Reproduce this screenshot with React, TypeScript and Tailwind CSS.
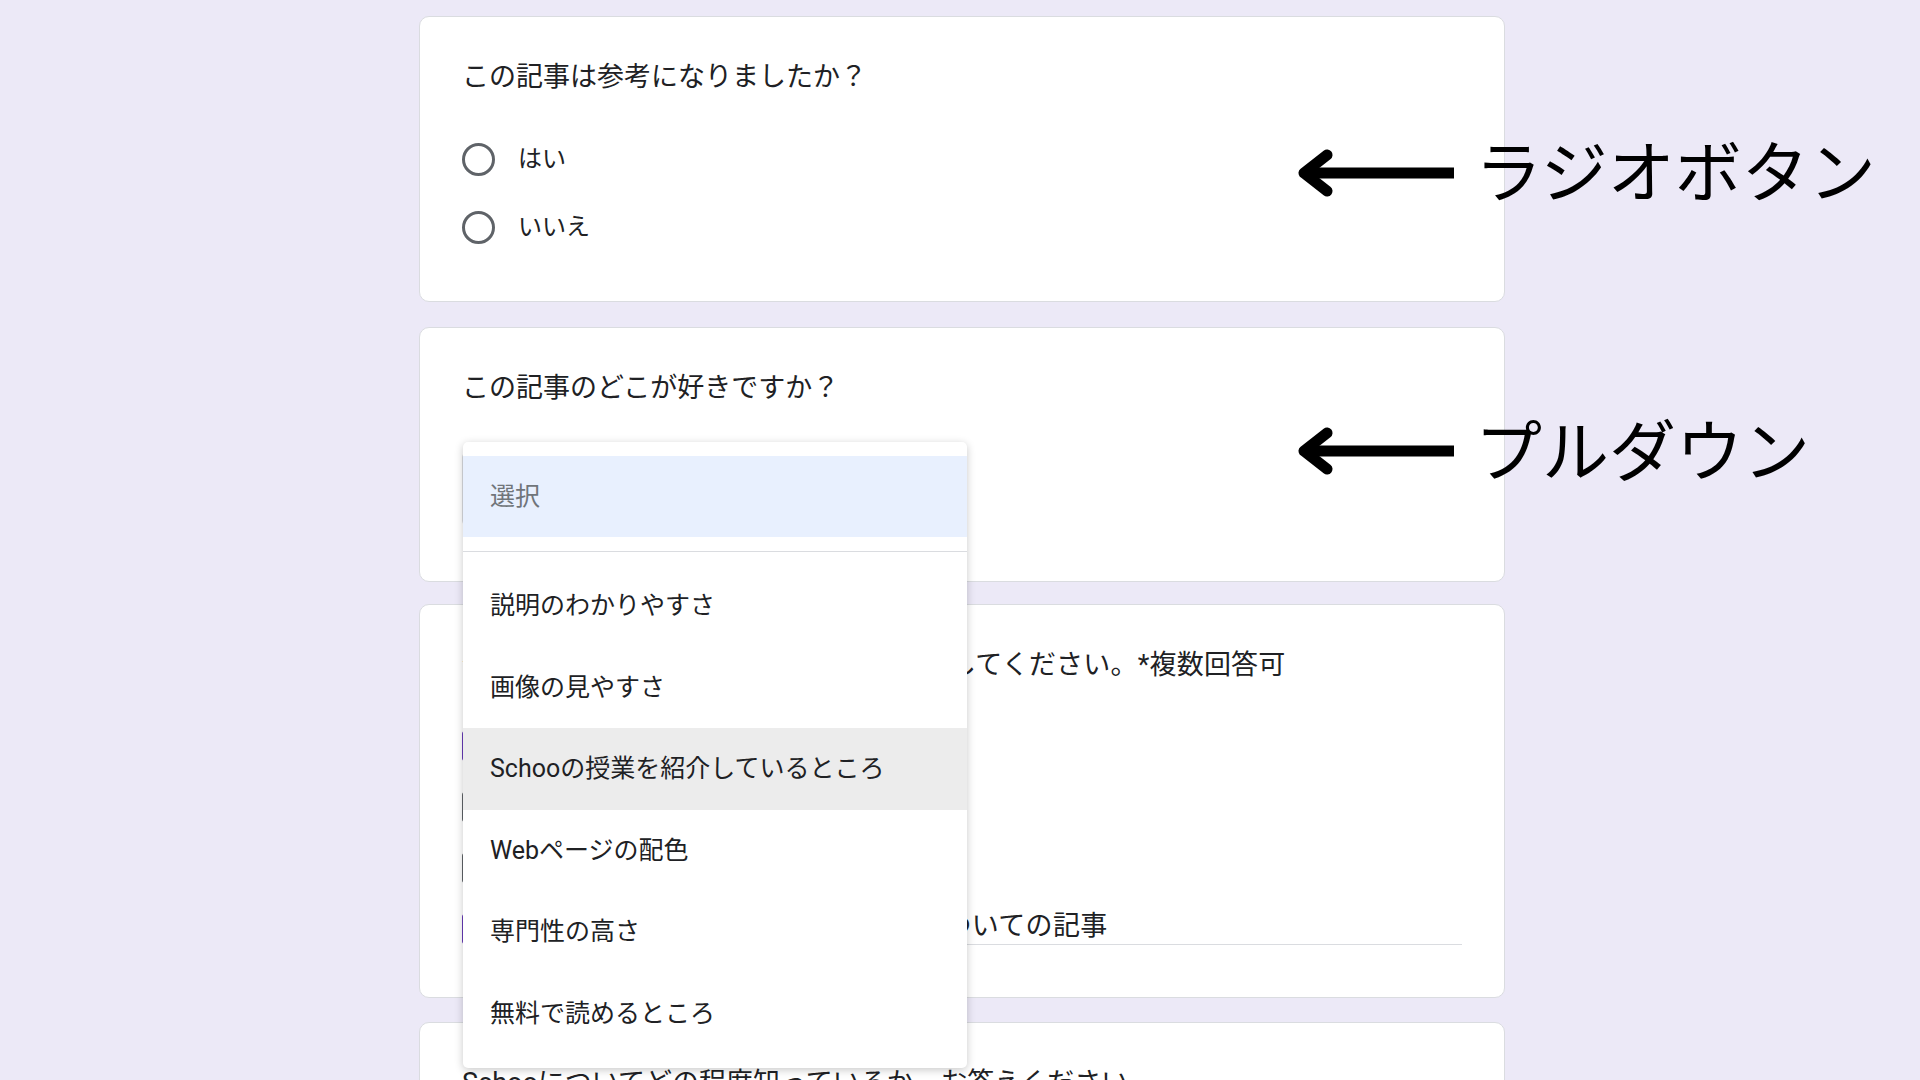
const options = [
  '説明のわかりやすさ',
  '画像の見やすさ',
  'Schooの授業を紹介しているところ',
  'Webページの配色',
  '専門性の高さ',
  '無料で読めるところ',
];

function Card({ className, children }: { className?: string; children: React.ReactNode }) {
  return (
    <div className={`relative bg-white border border-[#dadce0] rounded-[10px] px-[42px] ${className ?? ''}`}>
      {children}
    </div>
  );
}

function Radio({ label }: { label: string }) {
  return (
    <div className="flex items-center h-[40px]">
      <span className="w-[33px] h-[33px] rounded-full border-[3px] border-[#5f6368] shrink-0" />
      <span className="ml-[23px] text-[24px] text-[#202124]">{label}</span>
    </div>
  );
}

function Checkbox({ checked }: { checked?: boolean }) {
  return (
    <span
      className={
        checked
          ? 'w-[30px] h-[30px] rounded-[3px] bg-[#673ab7] shrink-0'
          : 'w-[30px] h-[30px] rounded-[3px] border-[3px] border-[#5f6368] shrink-0'
      }
    />
  );
}

function Arrow() {
  return (
    <svg width="160" height="50" viewBox="0 0 160 50" fill="none">
      <path d="M156 25 H8" stroke="#000" strokeWidth="11" strokeLinecap="butt" />
      <path d="M29 7 L6 25 L29 43" stroke="#000" strokeWidth="11" strokeLinecap="round" strokeLinejoin="round" />
    </svg>
  );
}

export default function App() {
  return (
    <div className="relative h-screen overflow-hidden bg-[#ece9f7] font-[Roboto,'Noto_Sans_CJK_JP',sans-serif] text-[#202124]">
      <div className="w-[1086px] ml-[419px] pt-[16px] flex flex-col">
        {/* ラジオボタン */}
        <Card className="h-[286px] pt-[40px]">
          <p className="text-[27px] leading-[40px]">この記事は参考になりましたか？</p>
          <div className="mt-[42px] flex flex-col gap-[28px]">
            <Radio label="はい" />
            <Radio label="いいえ" />
          </div>
        </Card>

        {/* プルダウン */}
        <Card className="h-[255px] mt-[25px] pt-[40px] z-10">
          <p className="text-[27px] leading-[40px]">この記事のどこが好きですか？</p>
          <div className="mt-[45px] w-[260px] h-[72px] border border-[#dadce0] rounded-[4px]" />

          <div className="absolute left-[43px] top-[114px] w-[504px] bg-white rounded-[5px] shadow-[0_2px_8px_rgba(0,0,0,0.22)] py-[14px]">
            <div className="h-[81px] bg-[#e8f0fe] flex items-center px-[27px] text-[25px] text-[#70757a]">
              選択
            </div>
            <div className="mt-[14px] mb-[13px] h-px bg-[#dadce0]" />
            {options.map((o, i) => (
              <div
                key={o}
                className={`h-[81.5px] flex items-center px-[27px] text-[25px] text-[#202124] ${i === 2 ? 'bg-[#ececec]' : ''}`}
              >
                {o}
              </div>
            ))}
          </div>
        </Card>

        {/* チェックボックス */}
        <Card className="h-[394px] mt-[22px] pt-[40px]">
          <p className="text-[27px] leading-[40px] tracking-[0.2px]">今後読んでみたい記事のジャンルを選択してください。*複数回答可</p>
          <div className="mt-[41px] flex flex-col gap-[21px]">
            <div className="flex items-center h-[40px]">
              <Checkbox checked />
              <span className="ml-[26px] text-[24px]">デザイン</span>
            </div>
            <div className="flex items-center h-[40px]">
              <Checkbox />
              <span className="ml-[26px] text-[24px]">プログラミング</span>
            </div>
            <div className="flex items-center h-[40px]">
              <Checkbox />
              <span className="ml-[26px] text-[24px]">ビジネス</span>
            </div>
            <div className="flex items-center h-[40px]">
              <Checkbox checked />
              <span className="ml-[26px] text-[24px]">その他:</span>
              <div className="ml-auto w-[654px] border-b border-[#dadce0] text-[27px] leading-[36px] -mt-[6px] tracking-[0.3px]">
                デザインについての記事
              </div>
            </div>
          </div>
        </Card>

        <Card className="h-[300px] mt-[24px] pt-[40px]">
          <p className="text-[27px] leading-[40px]">Schooについてどの程度知っているか、お答えください。</p>
        </Card>
      </div>

      {/* 注釈 */}
      <div className="absolute z-20 left-[1298px] top-[148px] flex items-center gap-[17px] text-black">
        <Arrow />
        <span className="text-[67px] leading-[60px] -mt-[10px] font-['Noto_Sans_CJK_JP',sans-serif]">ラジオボタン</span>
      </div>
      <div className="absolute z-20 left-[1298px] top-[425px] flex items-center gap-[17px] text-black">
        <Arrow />
        <span className="text-[67px] leading-[60px] -mt-[8px] font-['Noto_Sans_CJK_JP',sans-serif]">プルダウン</span>
      </div>
    </div>
  );
}
